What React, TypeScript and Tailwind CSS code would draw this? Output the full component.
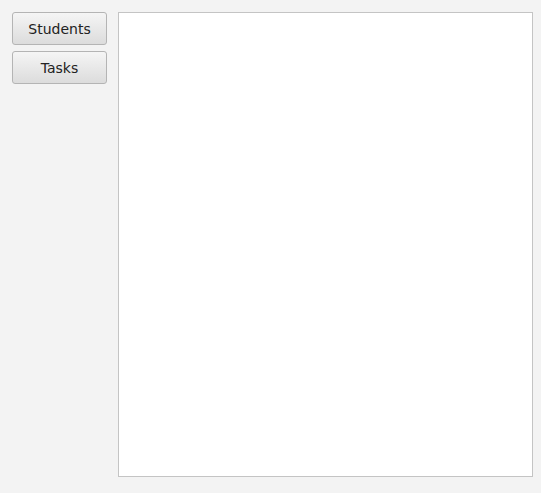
export default function App() {
  return (
    <div className="flex h-[493px] w-[541px] gap-[11px] bg-[#f3f3f3] p-3 font-['DejaVu_Sans',sans-serif]">
      <div className="flex w-[95px] shrink-0 flex-col gap-[6px]">
        <NavButton label="Students" />
        <NavButton label="Tasks" />
      </div>
      <div className="h-[465px] w-[415px] shrink-0 border border-[#c4c4c4] bg-white" />
    </div>
  );
}

function NavButton({ label }: { label: string }) {
  return (
    <button
      type="button"
      className="h-[33px] w-full rounded-[3px] border border-[#b4b4b4] bg-gradient-to-b from-[#f5f5f5] to-[#dcdcdc] pt-[2px] text-[14px] text-[#222]"
    >
      {label}
    </button>
  );
}
